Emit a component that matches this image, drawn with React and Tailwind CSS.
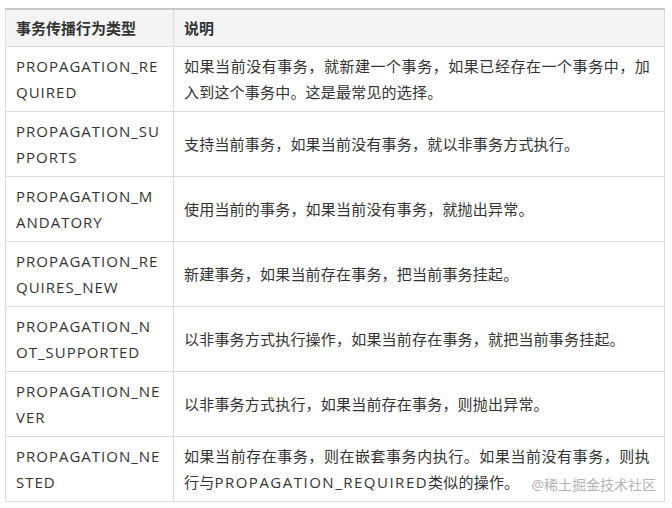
const rows = [
  [
    "PROPAGATION_REQUIRED",
    ["如果当前没有事务，就新建一个事务，如果已经存在一个事务中，加", "入到这个事务中。这是最常见的选择。"]
  ],
  ["PROPAGATION_SUPPORTS", ["支持当前事务，如果当前没有事务，就以非事务方式执行。"]],
  ["PROPAGATION_MANDATORY", ["使用当前的事务，如果当前没有事务，就抛出异常。"]],
  ["PROPAGATION_REQUIRES_NEW", ["新建事务，如果当前存在事务，把当前事务挂起。"]],
  ["PROPAGATION_NOT_SUPPORTED", ["以非事务方式执行操作，如果当前存在事务，就把当前事务挂起。"]],
  ["PROPAGATION_NEVER", ["以非事务方式执行，如果当前存在事务，则抛出异常。"]],
  [
    "PROPAGATION_NESTED",
    [
      "如果当前存在事务，则在嵌套事务内执行。如果当前没有事务，则执",
      <>
        行与<span className="tracking-[1.5px]">PROPAGATION_REQUIRED</span>类似的操作。
      </>
    ]
  ]
];

export default function App() {
  return (
    <div
      className="relative h-[508px] w-[672px] bg-white pl-[5px] pt-[8px] text-[15px] text-[#333]"
      style={{ fontFamily: '"Open Sans", "Noto Sans CJK SC", sans-serif' }}
    >
      <table className="w-[660px] table-fixed border-collapse">
        <colgroup>
          <col className="w-[168px]" />
          <col />
        </colgroup>
        <thead>
          <tr className="bg-[#f4f4f4]">
            <th className="border border-[#dcdcdc] border-t-2 border-t-[#c8c8c8] px-[10px] py-[5px] text-left font-bold leading-[26px]">
              事务传播行为类型
            </th>
            <th className="border border-[#dcdcdc] border-t-2 border-t-[#c8c8c8] px-[10px] py-[5px] text-left font-bold leading-[26px]">
              说明
            </th>
          </tr>
        </thead>
        <tbody>
          {rows.map(([name, lines]) => (
            <tr key={name}>
              <td className="break-all border border-[#dcdcdc] px-[10px] py-[6px] align-middle leading-[26px] tracking-[1px]">
                {name}
              </td>
              <td className="border border-[#dcdcdc] py-[6px] pl-[10px] pr-[14px] align-middle leading-[26px] tracking-[0.2px]">
                {lines.map((line, i) => (
                  <span
                    key={i}
                    className={
                      i < lines.length - 1
                        ? "block whitespace-nowrap text-justify [text-align-last:justify]"
                        : "block whitespace-nowrap"
                    }
                  >
                    {line}
                  </span>
                ))}
              </td>
            </tr>
          ))}
        </tbody>
      </table>
      <div className="absolute right-[16px] top-[474px] text-[14px] text-[#b4b4b4]">
        @稀土掘金技术社区
      </div>
    </div>
  );
}
